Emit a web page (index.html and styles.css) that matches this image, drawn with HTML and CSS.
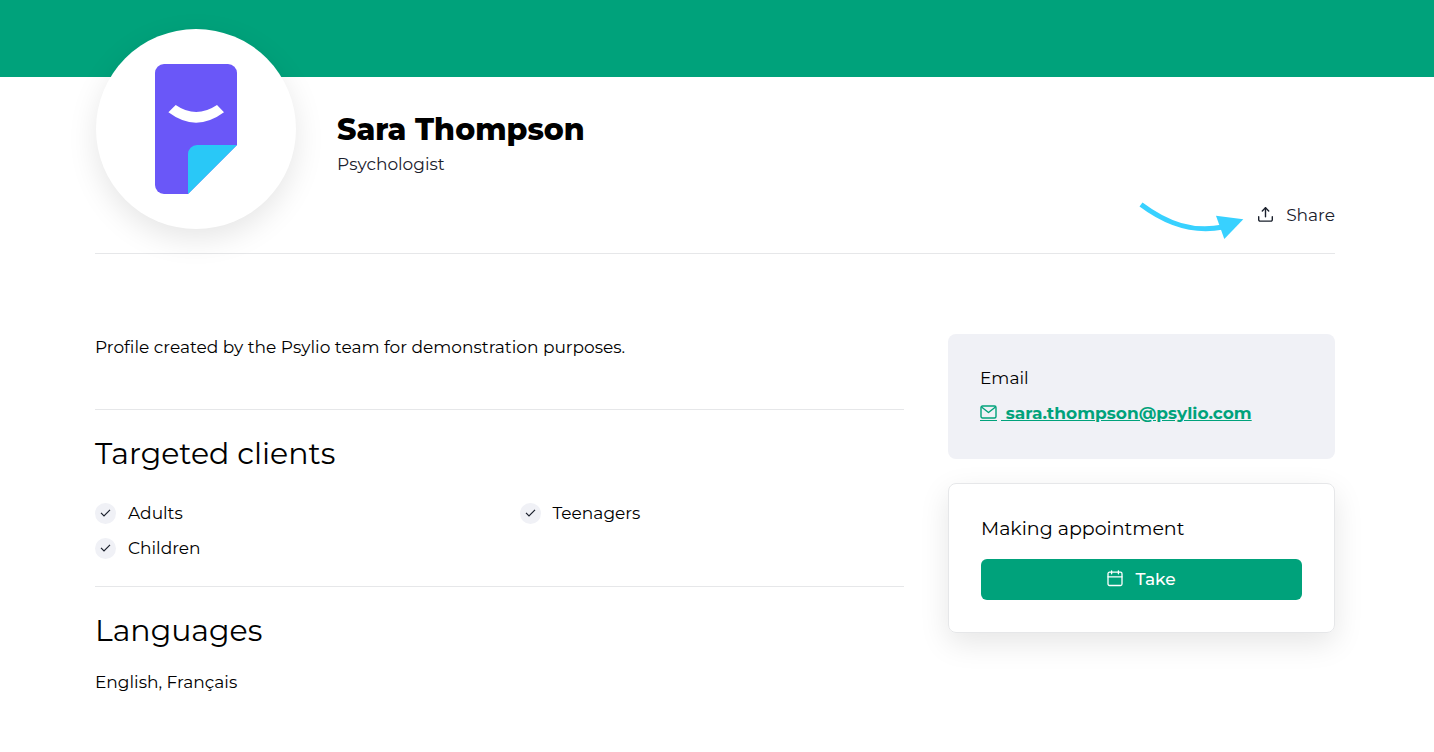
FILE: index.html
```html
<!DOCTYPE html>
<html lang="en">
<head>
  <meta charset="UTF-8">
  <meta name="viewport" content="width=device-width, initial-scale=1.0">
  <title>Sara Thompson | Psychologist</title>
  <link rel="stylesheet" href="styles.css">
</head>
<body>
  <div class="banner"></div>

  <div class="container">
    <header class="profile-header">
      <div class="avatar">
        <svg width="82" height="130" viewBox="0 0 82 130">
          <path fill="#6a57f8" d="M9 0H73A9 9 0 0 1 82 9V81L33 130H9A9 9 0 0 1 0 121V9A9 9 0 0 1 9 0Z"></path>
          <path fill="#29c8f7" d="M33 130V90A9 9 0 0 1 42 81H82Z"></path>
          <path fill="#fff" d="M20.7 41Q41 55 62 41L69 48.3Q41 69 13.4 48.3Z"></path>
        </svg>
      </div>
      <div class="identity">
        <h1>Sara Thompson</h1>
        <p>Psychologist</p>
      </div>
      <div class="share">
        <svg class="share-arrow" width="106" height="38" viewBox="0 0 106 38">
          <path d="M2 2.5C28 22 54 31 84 25" fill="none" stroke="#38d1ff" stroke-width="5"></path>
          <path d="M77 13.7L104.3 17.3L85.3 37Z" fill="#38d1ff"></path>
        </svg>
        <button class="btn-share" type="button">
          <svg width="17" height="17" viewBox="0 0 17 17" fill="none" stroke="currentColor" stroke-width="1.4" stroke-linecap="round" stroke-linejoin="round">
            <path d="M1.7 9.8v2.9a1.4 1.4 0 0 0 1.4 1.4h10.8a1.4 1.4 0 0 0 1.4-1.4v-2.9"></path>
            <path d="M5.3 4L8.5 0.8L11.7 4"></path>
            <path d="M8.5 0.8v8.9"></path>
          </svg>
          Share
        </button>
      </div>
    </header>

    <div class="layout">
      <main>
        <p class="intro">Profile created by the Psylio team for demonstration purposes.</p>

        <section>
          <h2>Targeted clients</h2>
          <ul class="check-list">
            <li>
              <span class="check">
                <svg width="11" height="9" viewBox="0 0 11 9" fill="none" stroke="currentColor" stroke-width="1.2"><path d="M1 3.8L4 6.8L10 0.8"></path></svg>
              </span>
              Adults
            </li>
            <li>
              <span class="check">
                <svg width="11" height="9" viewBox="0 0 11 9" fill="none" stroke="currentColor" stroke-width="1.2"><path d="M1 3.8L4 6.8L10 0.8"></path></svg>
              </span>
              Teenagers
            </li>
            <li>
              <span class="check">
                <svg width="11" height="9" viewBox="0 0 11 9" fill="none" stroke="currentColor" stroke-width="1.2"><path d="M1 3.8L4 6.8L10 0.8"></path></svg>
              </span>
              Children
            </li>
          </ul>
        </section>

        <section>
          <h2>Languages</h2>
          <p>English, Français</p>
        </section>
      </main>

      <aside>
        <div class="card card-contact">
          <p>Email</p>
          <a href="mailto:sara.thompson@psylio.com">
            <span class="mail-icon">
              <svg width="17" height="14" viewBox="0 0 17 14" fill="none" stroke="currentColor" stroke-width="1.4" stroke-linejoin="round">
                <rect x="1" y="1" width="15" height="12" rx="1.5"></rect>
                <path d="M1.5 2L8.5 7.5L15.5 2"></path>
              </svg>
            </span>
            <span class="mail-text">&nbsp;sara.thompson@psylio.com</span>
          </a>
        </div>

        <div class="card card-appointment">
          <h3>Making appointment</h3>
          <button class="btn-take" type="button">
            <svg width="16" height="18" viewBox="0 0 16 18" fill="none" stroke="currentColor" stroke-width="1.3" stroke-linecap="round">
              <rect x="1" y="2.2" width="14" height="13.3" rx="1.5"></rect>
              <path d="M1 6.8H15M4.6 0.8v3M11.4 0.8v3"></path>
            </svg>
            Take
          </button>
        </div>
      </aside>
    </div>
  </div>
</body>
</html>
```
FILE: styles.css
```css
:root {
  --primary: #00a27b;
  --dark: #1a202c;
  --light: #f0f1f6;
  --line: #e6e7e9;
  --shadow: 0 10px 30px rgba(0, 0, 0, 0.1);
}

* {
  margin: 0;
  padding: 0;
  box-sizing: border-box;
}

body {
  font-family: 'Montserrat', 'Inter', sans-serif;
  font-size: 17px;
  line-height: 26px;
  color: #000;
  background: #fff;
}

svg {
  display: block;
  flex-shrink: 0;
}

button {
  font: inherit;
  border: none;
  cursor: pointer;
  display: flex;
  align-items: center;
  justify-content: center;
  gap: 12px;
}

.banner {
  height: 77px;
  background: var(--primary);
}

.container {
  padding: 0 99px 48px 95px;
}

.profile-header {
  display: flex;
  gap: 41px;
  padding: 32px 0 24px 1px;
  border-bottom: 1px solid var(--line);
}

.avatar {
  width: 200px;
  height: 200px;
  margin-top: -80px;
  flex-shrink: 0;
  display: flex;
  align-items: center;
  justify-content: center;
  background: #fff;
  border-radius: 50%;
  box-shadow: var(--shadow);
}

.identity {
  flex: 1;
}

.identity h1 {
  font-size: 30px;
  line-height: 42px;
  font-weight: 800;
}

.identity p {
  color: var(--dark);
}

.share {
  position: relative;
  align-self: flex-end;
  line-height: 28px;
}

/* points at the share button */
.share-arrow {
  position: absolute;
  right: 100%;
  top: 1px;
  margin-right: 12px;
}

.btn-share {
  background: none;
  color: var(--dark);
}

.layout {
  display: grid;
  grid-template-columns: minmax(0, 1fr) 387px;
  gap: 44px;
  padding-top: 80px;
}

.intro {
  padding-bottom: 49px;
}

section {
  border-top: 1px solid var(--line);
  padding: 24px 0 25px;
}

h2 {
  font-size: 30px;
  line-height: 40px;
  font-weight: 400;
  margin-bottom: 18px;
}

.check-list {
  list-style: none;
  display: grid;
  grid-template-columns: 1fr 1fr;
  gap: 9px 40px;
  padding-top: 8px;
}

.check-list li {
  display: flex;
  align-items: center;
  gap: 12px;
}

.check {
  width: 21px;
  height: 21px;
  display: flex;
  align-items: center;
  justify-content: center;
  background: var(--light);
  color: var(--dark);
  border-radius: 50%;
}

.card {
  padding: 32px;
  border-radius: 8px;
}

.card-contact {
  background: var(--light);
  padding: 31px 32px 33px;
  margin-bottom: 24px;
}

.card-contact a {
  display: flex;
  align-items: center;
  gap: 4px;
  margin-top: 9px;
  color: var(--primary);
  font-weight: 700;
  text-decoration: none;
}

.mail-icon {
  padding-bottom: 1px;
  border-bottom: 1px solid var(--primary);
}

.mail-text {
  text-decoration: underline;
}

.card-appointment {
  border: 1px solid var(--line);
  box-shadow: var(--shadow);
}

.card-appointment h3 {
  font-size: 19px;
  font-weight: 400;
  margin-bottom: 17px;
}

.btn-take {
  width: 100%;
  padding: 7px 0 8px;
  background: var(--primary);
  color: #fff;
  font-weight: 500;
  border-radius: 6px;
}

@media (max-width: 900px) {
  .container {
    padding: 0 20px 40px;
  }

  .layout {
    grid-template-columns: 1fr;
  }

  .profile-header {
    flex-wrap: wrap;
  }
}
```
